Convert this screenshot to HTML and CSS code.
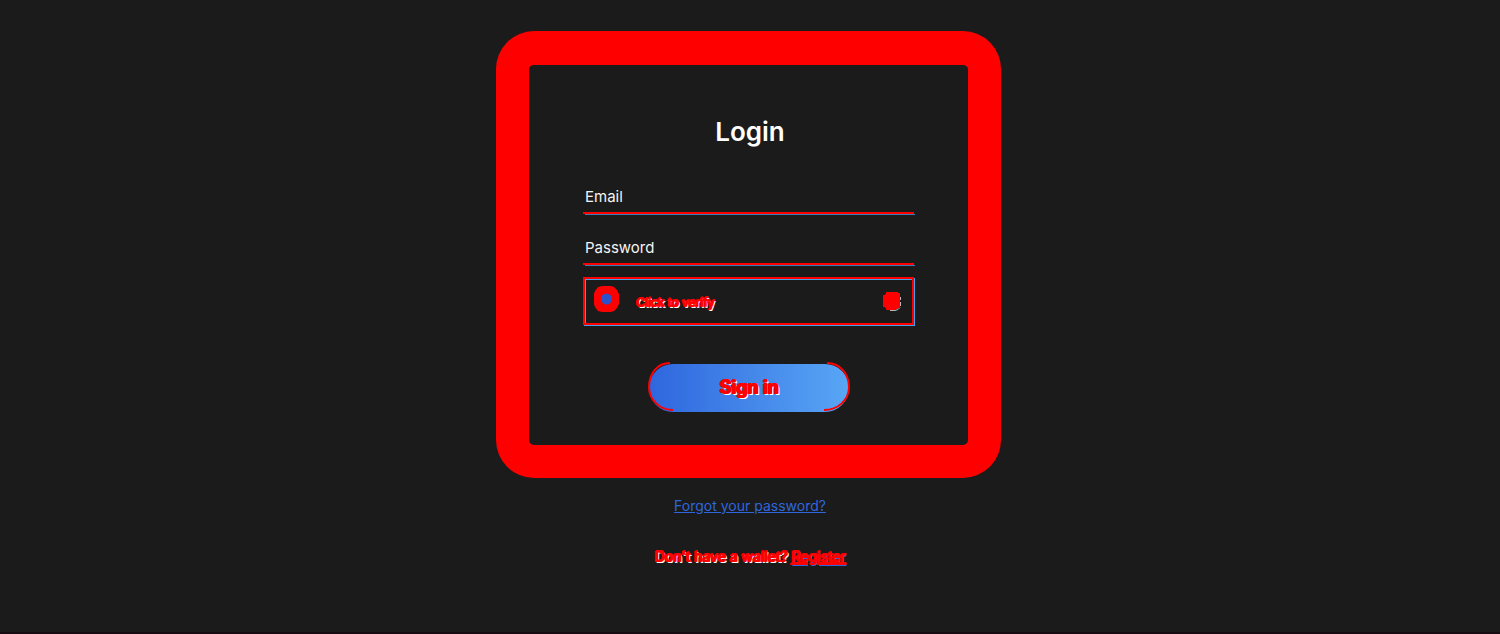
FILE: index.html
```html
<!DOCTYPE html>
<html lang="en">
<head>
<meta charset="utf-8">
<meta name="viewport" content="width=device-width, initial-scale=1">
<title>Login</title>
<link rel="stylesheet" href="styles.css">
</head>
<body>
<main class="page">
  <form class="card">
    <h1 class="title">Login</h1>
    <div class="field"><input class="input" type="email" placeholder="Email" aria-label="Email"></div>
    <div class="field"><input class="input" type="password" placeholder="Password" aria-label="Password"></div>
    <button class="verify" type="button">
      <svg class="radar" width="28" height="28" viewBox="0 0 28 28" aria-hidden="true">
        <path d="M9 1h9l3 1 3 3 2 4v10l-2 4-3 3-3 1H9l-4-1-3-4-1-3V9l1-3 3-4z" fill="#f00"/>
        <circle cx="13.5" cy="14" r="5.5" fill="#2d51c8"/>
      </svg>
      <span class="marked">Click to verify</span>
      <svg class="badge" width="18" height="20" viewBox="0 0 18 20" aria-hidden="true">
        <path d="M17.5 5v3M17.5 10v4M7 18.5h5l3-1 2-2" fill="none" stroke="#b5b5b5"/>
        <path d="M3 0h12v1h2v15h-2v1h-2v1H3v-2H2v-1H0V3h2V2h1z" fill="#f00"/>
      </svg>
    </button>
    <button class="submit" type="submit">
      <svg class="arc arc-left" width="26" height="50" viewBox="0 0 26 50" aria-hidden="true"><path d="M22 1C9 1 1 12 1 25s11 23 24 23" fill="none" stroke="#f00" stroke-width="2"/></svg>
      <span class="marked">Sign in</span>
      <svg class="arc arc-right" width="26" height="50" viewBox="0 0 26 50" aria-hidden="true"><path d="M3 1c13 0 22 11 22 24S14 48 0 48" fill="none" stroke="#f00" stroke-width="2"/></svg>
    </button>
  </form>
  <div class="links">
    <a class="forgot" href="#">Forgot your password?</a>
    <p class="signup"><span class="marked">Don't have a wallet?</span> <a class="register" href="#">Register</a></p>
  </div>
</main>
</body>
</html>
```
FILE: styles.css
```css
* {
  box-sizing: border-box;
}

body {
  margin: 0;
  background: #1b1b1b;
  color: #fff;
  font-family: Inter, "Liberation Sans", sans-serif;
}

.page {
  display: flex;
  flex-direction: column;
  align-items: center;
  min-height: 100vh;
  padding: 31px 16px 0 13px;
  border-bottom: 2px solid #160c11;
}

.card {
  display: flex;
  flex-direction: column;
  width: 100%;
  max-width: 505px;
  padding: 51px 53px 33px 54px;
  border: 33px solid #f00;
  border-top-width: 34px;
  border-radius: 38px;
}

.title {
  margin: 0 0 35px;
  padding-left: 2px;
  font-size: 26px;
  font-weight: 600;
  line-height: 32px;
  text-align: center;
}

.field {
  height: 32px;
  margin-bottom: 19px;
  background:
    linear-gradient(#f00, #f00) 0 calc(100% - 1px) / calc(100% - 1px) 2px no-repeat,
    linear-gradient(#3d7eb5, #3d7eb5) 100% 100% / calc(100% - 2px) 1px no-repeat;
}

.field + .verify {
  margin-top: -8px;
}

.input {
  display: block;
  width: 100%;
  height: 26px;
  padding: 0 2px;
  border: 0;
  outline: 0;
  background: transparent;
  color: #fff;
  font: 15px/24px Inter, "Liberation Sans", sans-serif;
}

.input::placeholder {
  color: #f4f4f4;
  opacity: 1;
}

.marked {
  color: #f00;
  text-shadow: 1px 0 #f00, -1px 0 #f00, 0 -1px #f00, 1px -1px #f00, 1px 1px #fff, 2px 1px #fff;
}

.verify {
  display: flex;
  align-items: center;
  height: 48px;
  margin: 0 1px 0 0;
  padding: 0 11px 0 8px;
  border: 2px solid #f00;
  background: transparent;
  box-shadow: inset 1px 1px #48a0e8, 1px 1px #48a0e8;
  font: 12px/16px Inter, "Liberation Sans", sans-serif;
}

.verify .marked {
  padding-top: 4px;
}

.radar {
  margin: 0 15px 4px 0;
}

.badge {
  margin: 2px 0 0 auto;
}

.submit {
  position: relative;
  align-self: center;
  width: 200px;
  height: 48px;
  margin-top: 39px;
  padding: 0;
  border: 0;
  border-radius: 24px;
  background: linear-gradient(90deg, #2f66de, #58a6f5);
  font: 600 18px/24px Inter, "Liberation Sans", sans-serif;
}

.arc {
  position: absolute;
  top: -2px;
}

.arc-left {
  left: -1px;
}

.arc-right {
  right: -1px;
}

.links {
  padding: 18px 0 0 3px;
  font-size: 14px;
  line-height: 20px;
  text-align: center;
}

.forgot {
  color: #2f66de;
}

.signup {
  margin: 31px 0 0;
}

.register {
  color: #f00;
  text-shadow: 1px 0 #f00, -1px 0 #f00, 0 -1px #f00, 1px -1px #f00, 1px 1px #2f66de;
  text-decoration-thickness: 2px;
}
```
